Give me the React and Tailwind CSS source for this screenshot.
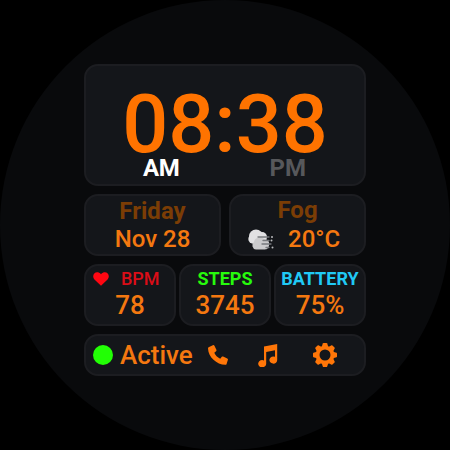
const card = 'box-border border-2 border-[#1c1d21] bg-[#14161a] font-medium text-[#f47810] whitespace-nowrap';

function Heart() {
  return (
    <svg className="w-4 h-[14px] shrink-0" viewBox="0 0 16 14" fill="#ff0712">
      <path d="M8 13.7 1.7 7.8C-.2 6-.2 3 1.3 1.4 3-.4 6-.2 8 2.2 10-.2 13-.4 14.700 1.400c1.500 1.600 1.500 4.600-.4 6.400Z" />
    </svg>
  );
}

function FogIcon() {
  return (
    <svg className="w-[26px] h-[22px] shrink-0" viewBox="0 0 26 22">
      <g fill="#e1e1e3">
        <circle cx="8" cy="7.500" r="7" />
        <circle cx="5" cy="10" r="4.700" />
        <circle cx="14" cy="8" r="5" />
      </g>
      <path d="M8 20.500a4.200 4.200 0 0 1-2-7.500 6 6 0 0 1 10-3c4 0 6 3 5 6.500s-2 4-5 4Z" fill="#cbcbcd" />
      <g stroke="#777a7e" strokeWidth="1.300" strokeLinecap="round">
        <path d="M10 8h11M15 11.500h6M14 15h9M18 18.500h3" />
      </g>
      <g fill="#b9babd">
        <circle cx="24" cy="8" r="1" />
        <circle cx="23.500" cy="11.500" r="1" />
        <circle cx="24.500" cy="18.500" r="1" />
      </g>
    </svg>
  );
}

function Phone() {
  return (
    <svg className="w-5 h-5 shrink-0" viewBox="0 0 20 20" fill="#ff7608">
      <path d="M.6 2.300 4.800.2c.6-.3 1.200-.1 1.500.4L8.400 4.800c.2.500.1 1-.3 1.400L6.300 7.700c1 2.400 3.200 4.700 5.900 6l1.600-1.900c.3-.4.8-.5 1.300-.3l4.200 1.900c.5.2.8.8.6 1.300l-1.300 4.200c-.2.6-.6.900-1.200.900C8.500 19.500.4 12 0 3.400c0-.5.200-.9.600-1.100Z" />
    </svg>
  );
}

function Music() {
  return (
    <svg className="w-5 h-[23px] shrink-0" viewBox="0 0 20 23" fill="#ff7608">
      <path d="M6 2.500 19.200 0v15.800a3.900 3.600 0 1 1-2.200-3V6.200L8.200 7.900v11.500a4 3.700 0 1 1-2.200-3Z" />
    </svg>
  );
}

function Gear() {
  return (
    <svg className="w-6 h-6 shrink-0" viewBox="-12 -12 24 24" fill="none">
      <circle r="7.400" stroke="#ff7608" strokeWidth="3.800" />
      {[0, 45, 90, 135, 180, 225, 270, 315].map((a) => (
        <path key={a} transform={`rotate(${a})`} d="M-3.300-8-2.200-11.500Q-2-12-1.500-12h3q.5 0 .7.500L3.300-8Z" fill="#ff7608" />
      ))}
    </svg>
  );
}

export default function App() {
  return (
    <main className="w-[450px] h-[450px] overflow-hidden bg-black font-['Roboto',sans-serif]">
      <div className="w-[450px] h-[450px] rounded-full bg-[#090a0c] px-[84px] pt-16 flex flex-col gap-2">
        <section className={`${card} h-[122px] rounded-[14px]`}>
          <div className="h-[92px] pt-[18px] text-center text-[81px] leading-[81px] text-[#ff7300]">08:38</div>
          <div className="flex justify-between pl-[57px] pr-[58px] text-[24px] leading-[24px] font-bold -mt-[2px]">
            <span className="text-white tracking-[-0.5px]">AM</span>
            <span className="text-[#57585b]">PM</span>
          </div>
        </section>
        <div className="flex gap-2">
          <section className={`${card} w-[137px] h-[62px] rounded-[14px] text-center text-[24px] leading-[28px] pt-[1px]`}>
            <div className="font-bold text-[#7b3d05]">Friday</div>
            <div>Nov 28</div>
          </section>
          <section className={`${card} w-[137px] h-[62px] rounded-[14px] text-[24px] leading-[28px]`}>
            <div className="text-center font-bold text-[#7b3d05]">Fog</div>
            <div className="flex pl-[17px] gap-[14px]">
              <div className="pt-[5px]"><FogIcon /></div>
              <span className="pt-[1px]">20°C</span>
            </div>
          </section>
        </div>
        <div className="flex gap-[3px]">
          <section className={`${card} w-[92px] h-[62px] rounded-[14px] text-center`}>
            <div className="flex items-center pl-[7px] gap-[12px] h-[25px] text-[18px] leading-[25px] text-[#da0d17]">
              <Heart /><span>BPM</span>
            </div>
            <div className="text-[26px] leading-[28px]">78</div>
          </section>
          <section className={`${card} w-[92px] h-[62px] rounded-[14px] text-center`}>
            <div className="text-[18px] leading-[25px] font-bold text-[#27fb0c]">STEPS</div>
            <div className="text-[26px] leading-[28px]">3745</div>
          </section>
          <section className={`${card} w-[92px] h-[62px] rounded-[14px] text-center`}>
            <div className="text-[18px] leading-[25px] font-bold text-[#20c9f5]">BATTERY</div>
            <div className="text-[26px] leading-[28px]">75%</div>
          </section>
        </div>
        <section className={`${card} h-[42px] rounded-[14px] flex items-center pl-[7px]`}>
          <span className="w-5 h-5 rounded-full bg-[#22ff05]" />
          <span className="w-[95px] pl-[7px] text-[26px] leading-[30px]">Active</span>
          <Phone />
          <div className="ml-[30px]"><Music /></div>
          <div className="ml-[35px]"><Gear /></div>
        </section>
      </div>
    </main>
  );
}
